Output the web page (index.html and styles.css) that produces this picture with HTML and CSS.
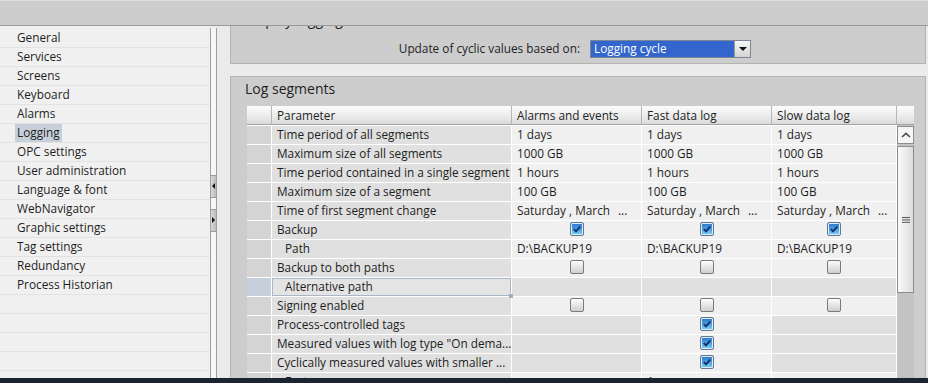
FILE: index.html
```html
<!DOCTYPE html>
<html lang="en">
<head>
    <meta charset="UTF-8">
    <title>Runtime settings - Logging</title>
    <link rel="stylesheet" href="styles.css">
</head>
<body>
    <div class="topbar"></div>

    <div class="workspace">
        <nav class="nav">
            <div class="nav-item"><span class="nav-label">General</span></div>
            <div class="nav-item"><span class="nav-label">Services</span></div>
            <div class="nav-item"><span class="nav-label">Screens</span></div>
            <div class="nav-item"><span class="nav-label">Keyboard</span></div>
            <div class="nav-item"><span class="nav-label">Alarms</span></div>
            <div class="nav-item"><span class="nav-label active">Logging</span></div>
            <div class="nav-item"><span class="nav-label">OPC settings</span></div>
            <div class="nav-item"><span class="nav-label">User administration</span></div>
            <div class="nav-item"><span class="nav-label">Language &amp; font</span></div>
            <div class="nav-item"><span class="nav-label">WebNavigator</span></div>
            <div class="nav-item"><span class="nav-label">Graphic settings</span></div>
            <div class="nav-item"><span class="nav-label">Tag settings</span></div>
            <div class="nav-item"><span class="nav-label">Redundancy</span></div>
            <div class="nav-item"><span class="nav-label">Process Historian</span></div>
            <div class="nav-item"></div>
            <div class="nav-item"></div>
            <div class="nav-item"></div>
            <div class="nav-item"></div>
            <div class="nav-item"></div>
        </nav>

        <div class="splitter">
            <span class="split-btn"><span class="tri-left"></span></span>
            <span class="split-btn"><span class="tri-right"></span></span>
        </div>

        <main class="content">
            <section class="panel panel-clipped">
                <h2 class="panel-title">Display logging</h2>
                <div class="field-row">
                    <label class="field-label">Update of cyclic values based on:</label>
                    <div class="select">
                        <span class="select-value">Logging cycle</span>
                        <span class="select-btn"><span class="tri-down"></span></span>
                    </div>
                </div>
            </section>

            <section class="panel">
                <h2 class="panel-title">Log segments</h2>
                <div class="table-wrap">
                    <div class="grid">
                        <div class="row head">
                            <div class="cell rh"></div>
                            <div class="cell">Parameter</div>
                            <div class="cell">Alarms and events</div>
                            <div class="cell">Fast data log</div>
                            <div class="cell">Slow data log</div>
                        </div>

                        <div class="rows">
                            <div class="row">
                                <div class="cell rh"></div>
                                <div class="cell param">Time period of all segments</div>
                                <div class="cell">1 days</div>
                                <div class="cell">1 days</div>
                                <div class="cell">1 days</div>
                            </div>
                            <div class="row">
                                <div class="cell rh"></div>
                                <div class="cell param">Maximum size of all segments</div>
                                <div class="cell">1000 GB</div>
                                <div class="cell">1000 GB</div>
                                <div class="cell">1000 GB</div>
                            </div>
                            <div class="row">
                                <div class="cell rh"></div>
                                <div class="cell param">Time period contained in a single segment</div>
                                <div class="cell">1 hours</div>
                                <div class="cell">1 hours</div>
                                <div class="cell">1 hours</div>
                            </div>
                            <div class="row">
                                <div class="cell rh"></div>
                                <div class="cell param">Maximum size of a segment</div>
                                <div class="cell">100 GB</div>
                                <div class="cell">100 GB</div>
                                <div class="cell">100 GB</div>
                            </div>
                            <div class="row">
                                <div class="cell rh"></div>
                                <div class="cell param">Time of first segment change</div>
                                <div class="cell more"><span class="more-text">Saturday , March</span><span>...</span></div>
                                <div class="cell more"><span class="more-text">Saturday , March</span><span>...</span></div>
                                <div class="cell more"><span class="more-text">Saturday , March</span><span>...</span></div>
                            </div>
                            <div class="row">
                                <div class="cell rh"></div>
                                <div class="cell param">Backup</div>
                                <div class="cell chk"><span class="cb on"><svg class="tick" viewBox="0 0 12 12"><path d="M2.8 6 L5 8.3 L9.2 3.6"/></svg></span></div>
                                <div class="cell chk"><span class="cb on"><svg class="tick" viewBox="0 0 12 12"><path d="M2.8 6 L5 8.3 L9.2 3.6"/></svg></span></div>
                                <div class="cell chk"><span class="cb on"><svg class="tick" viewBox="0 0 12 12"><path d="M2.8 6 L5 8.3 L9.2 3.6"/></svg></span></div>
                            </div>
                            <div class="row">
                                <div class="cell rh"></div>
                                <div class="cell param sub">Path</div>
                                <div class="cell">D:\BACKUP19</div>
                                <div class="cell">D:\BACKUP19</div>
                                <div class="cell">D:\BACKUP19</div>
                            </div>
                            <div class="row">
                                <div class="cell rh"></div>
                                <div class="cell param">Backup to both paths</div>
                                <div class="cell chk"><span class="cb"></span></div>
                                <div class="cell chk"><span class="cb"></span></div>
                                <div class="cell chk"><span class="cb"></span></div>
                            </div>
                            <div class="row">
                                <div class="cell rh selected"></div>
                                <div class="cell param sub sel">Alternative path</div>
                                <div class="cell off"></div>
                                <div class="cell off"></div>
                                <div class="cell off"></div>
                            </div>
                            <div class="row">
                                <div class="cell rh"></div>
                                <div class="cell param">Signing enabled</div>
                                <div class="cell chk"><span class="cb"></span></div>
                                <div class="cell chk"><span class="cb"></span></div>
                                <div class="cell chk"><span class="cb"></span></div>
                            </div>
                            <div class="row">
                                <div class="cell rh"></div>
                                <div class="cell param">Process-controlled tags</div>
                                <div class="cell off"></div>
                                <div class="cell chk"><span class="cb on"><svg class="tick" viewBox="0 0 12 12"><path d="M2.8 6 L5 8.3 L9.2 3.6"/></svg></span></div>
                                <div class="cell off"></div>
                            </div>
                            <div class="row">
                                <div class="cell rh"></div>
                                <div class="cell param">Measured values with log type "On dema...</div>
                                <div class="cell off"></div>
                                <div class="cell chk"><span class="cb on"><svg class="tick" viewBox="0 0 12 12"><path d="M2.8 6 L5 8.3 L9.2 3.6"/></svg></span></div>
                                <div class="cell off"></div>
                            </div>
                            <div class="row">
                                <div class="cell rh"></div>
                                <div class="cell param">Cyclically measured values with smaller ...</div>
                                <div class="cell off"></div>
                                <div class="cell chk"><span class="cb on"><svg class="tick" viewBox="0 0 12 12"><path d="M2.8 6 L5 8.3 L9.2 3.6"/></svg></span></div>
                                <div class="cell off"></div>
                            </div>
                            <div class="row">
                                <div class="cell rh"></div>
                                <div class="cell param sub">Factor</div>
                                <div class="cell"></div>
                                <div class="cell">1</div>
                                <div class="cell"></div>
                            </div>
                        </div>
                    </div>

                    <div class="vscroll">
                        <div class="vscroll-head"></div>
                        <div class="vscroll-track">
                            <div class="vscroll-up">
                                <svg width="10" height="6" viewBox="0 0 10 6"><path d="M1 5 L5 1.4 L9 5"/></svg>
                            </div>
                            <div class="vscroll-thumb">
                                <svg width="8" height="6" viewBox="0 0 8 6"><path d="M0 0.5 H8 M0 2.9 H8 M0 5.3 H8"/></svg>
                            </div>
                        </div>
                    </div>
                </div>
            </section>
        </main>
    </div>

    <div class="statusbar"></div>
</body>
</html>
```

FILE: styles.css
```css
/* Palette */
:root {
    --bg-page: #ebebeb;
    --bg-nav: #f0f0f0;
    --bg-bar: #cdcdcd;
    --bg-panel: #cdcdcd;
    --border-panel: #b3b3b3;

    --cell-light: #f0f0f0;
    --cell-dark: #e0e0e0;
    --cell-rowhead: #d4d4d4;
    --cell-selected: #c6d0dc;

    --select-blue: #3366cc;
    --text: #1e1e1e;

    --head-gradient: linear-gradient(#fbfbfb, #ececec 55%, #dadada);
}

* {
    box-sizing: border-box;
    margin: 0;
    padding: 0;
}

body {
    width: 928px;
    height: 383px;
    overflow: hidden;
    display: flex;
    flex-direction: column;
    font-family: 'Open Sans', 'Noto Sans', sans-serif;
    font-size: 11.8px;
    color: var(--text);
    background: var(--bg-page);
}

.topbar {
    height: 26px;
    flex-shrink: 0;
    background: var(--bg-bar);
    border-top: 1px solid #dedede;
    border-bottom: 1px solid #9a9a9a;
}

.workspace {
    flex: 1;
    display: flex;
    min-height: 0;
}

.statusbar {
    height: 5px;
    flex-shrink: 0;
    background: #1d2431;
}

/* Left navigation */
.nav {
    width: 210px;
    padding-top: 3px;
    background: var(--bg-nav);
    overflow: hidden;
}

.nav-item {
    height: 19px;
    padding-left: 15px;
    border-bottom: 1px solid #e3e3e3;
}

.nav-label {
    display: inline-block;
    padding: 0 2px 1px;
    line-height: 17px;
}

.nav-label.active {
    background: #c7d0da;
}

.splitter {
    width: 7px;
    margin-top: 2px;
    display: flex;
    flex-direction: column;
    justify-content: center;
    gap: 11px;
    background: #f7f7f7;
    border-left: 1px solid #a0a0a0;
    border-right: 1px solid #a0a0a0;
}

.split-btn {
    height: 23px;
    display: flex;
    align-items: center;
    justify-content: center;
    background: linear-gradient(90deg, #dadada, #bcbcbc);
    border-top: 1px solid #9a9a9a;
    border-bottom: 1px solid #9a9a9a;
}

.tri-left {
    border-top: 3px solid transparent;
    border-bottom: 3px solid transparent;
    border-right: 3px solid #111;
}

.tri-right {
    border-top: 3px solid transparent;
    border-bottom: 3px solid transparent;
    border-left: 3px solid #111;
}

/* Content panels */
.content {
    flex: 1;
    padding: 0 2px 0 13px;
    overflow: hidden;
}

.panel {
    background: var(--bg-panel);
    border: 1px solid var(--border-panel);
    padding: 0 0 5px 14px;
}

.panel-clipped {
    margin-top: -19px;
}

.panel + .panel {
    margin-top: 12px;
}

.panel-title {
    font-size: 14px;
    font-weight: normal;
    line-height: 20px;
    padding-top: 2px;
}

.field-row {
    display: flex;
    align-items: flex-start;
    gap: 10px;
    height: 18px;
    margin-top: 10px;
}

.field-label {
    width: 335px;
    text-align: right;
    line-height: 17px;
}

.select {
    width: 161px;
    height: 18px;
    display: flex;
    background: var(--select-blue);
    border: 1px solid #7d8696;
    color: #fff;
}

.select-value {
    flex: 1;
    padding-left: 3px;
    line-height: 15px;
}

.select-btn {
    width: 16px;
    display: flex;
    align-items: center;
    justify-content: center;
    background: linear-gradient(#f7f7f7, #d4d4d4);
    border-left: 1px solid #9a9a9a;
}

.tri-down {
    border-left: 4px solid transparent;
    border-right: 4px solid transparent;
    border-top: 4px solid #111;
}

/* Parameter table */
.table-wrap {
    display: flex;
    margin: 7px 0 0 2px;
}

.grid {
    width: 650px;
}

.row {
    display: grid;
    grid-template-columns: 25px 240px 130px 130px 125px;
    height: 19px;
}

.rows {
    border-top: 1px solid #fff;
}

.cell {
    padding: 0 0 1px 5px;
    line-height: 17px;
    white-space: nowrap;
    overflow: hidden;
    background: var(--cell-light);
    border-right: 1px solid #fff;
    border-bottom: 1px solid #fff;
}

.cell.param,
.cell.off {
    background: var(--cell-dark);
}

.cell.rh {
    padding: 0;
    background: var(--cell-rowhead);
}

.cell.rh.selected {
    background: var(--cell-selected);
}

.cell.sub {
    padding-left: 13px;
}

.cell.sel {
    position: relative;
    overflow: visible;
    background: #e4e4e4;
    box-shadow: inset 0 0 0 1px #aab6c6;
}

.cell.sel::after {
    content: '';
    position: absolute;
    right: -2px;
    bottom: -2px;
    width: 4px;
    height: 4px;
    background: #9fb0c4;
}

.row.head .cell {
    line-height: 19px;
    padding-bottom: 0;
    background: var(--head-gradient);
    border-right-color: #b5b5b5;
    border-bottom-color: #a3a3a3;
}

.cell.more {
    display: flex;
}

.more-text {
    width: 101px;
    overflow: hidden;
}

.cell.chk {
    display: flex;
    justify-content: center;
    padding: 1px 0 0;
}

.cb {
    width: 14px;
    height: 14px;
    display: flex;
    align-items: center;
    justify-content: center;
    border: 1px solid #7a7a7a;
    border-radius: 2px;
    background: linear-gradient(#fdfdfd, #e6e6e6 50%, #cfcfcf);
}

.cb.on {
    border-color: #66788d;
    background: linear-gradient(#2c74cc, #4da3e4 55%, #7dd6f7);
    box-shadow: inset 0 0 0 1px #d7ecfb;
}

.tick {
    width: 12px;
    height: 12px;
}

.tick path {
    fill: none;
    stroke: #0f2f66;
    stroke-width: 1.8;
}

/* Vertical scrollbar */
.vscroll {
    width: 17px;
    display: flex;
    flex-direction: column;
}

.vscroll-head {
    height: 19px;
    background: var(--head-gradient);
    border-bottom: 1px solid #a3a3a3;
}

.vscroll-track {
    flex: 1;
    padding-top: 1px;
    background: #c3c3c3;
}

.vscroll-up {
    height: 18px;
    display: flex;
    align-items: center;
    justify-content: center;
    background: #f5f5f5;
    border: 1px solid #8d8d8d;
}

.vscroll-up path {
    fill: none;
    stroke: #4a4a4a;
    stroke-width: 1.6;
}

.vscroll-thumb {
    height: 147px;
    margin-top: 2px;
    display: flex;
    align-items: center;
    justify-content: center;
    background: linear-gradient(90deg, #fafafa, #dcdcdc);
    border: 1px solid #8d8d8d;
}

.vscroll-thumb path {
    stroke: #555;
    stroke-width: 1;
}
```
